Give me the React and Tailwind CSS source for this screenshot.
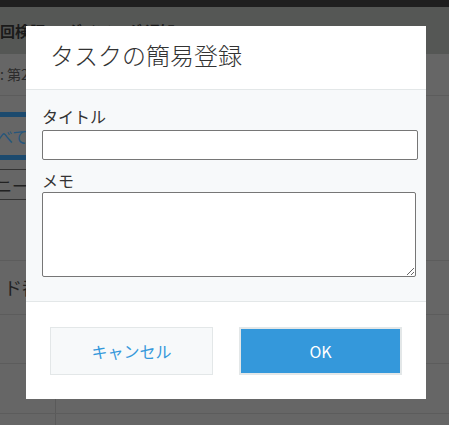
export default function App() {
  const font = { fontFamily: '"Noto Sans CJK JP", "Noto Sans", sans-serif' };
  return (
    <div className="relative w-[449px] h-[425px] overflow-hidden bg-[#666666]" style={font}>
      {/* dimmed background page */}
      <div className="flex flex-col">
        <div className="h-[7px] bg-[#1f1f1f]" />
        <div className="h-[47px] bg-[#555755] flex items-center">
          <span className="text-[15px] font-bold text-[#1a1a1a] whitespace-nowrap leading-none">回検証 ー ダイアログ 通知API</span>
        </div>
        <div className="h-[42px] border-b border-[#5c5c5c] flex items-center">
          <span className="text-[14px] text-[#2b2b2b] whitespace-nowrap">: 第2回検証</span>
        </div>
        <div className="h-[165px] border-b border-[#5c5c5c] flex flex-col pt-[16px]">
          <div className="h-[5px] w-[60px] bg-[#1c4a6e]" />
          <div className="h-[38px] flex items-center">
            <span className="text-[16px] text-[#27567c] ml-[-3px] whitespace-nowrap">べて</span>
          </div>
          <div className="h-[5px] w-[60px] bg-[#1c4a6e]" />
          <div className="mt-[9px] h-[31px] w-[60px] border-y border-[#333333] flex items-center">
            <span className="text-[16px] text-[#222222] ml-[-4px] whitespace-nowrap">ニーイ</span>
          </div>
        </div>
        <div className="h-[54px] border-b border-[#5c5c5c] flex items-center">
          <span className="text-[18px] text-[#222222] ml-[4px] whitespace-nowrap">ド番</span>
        </div>
        <div className="h-[49px] border-b border-[#5c5c5c] flex">
          <div className="w-[56px] border-r border-[#5a5a5a]" />
        </div>
        <div className="h-[50px] border-b border-[#5c5c5c] flex">
          <div className="w-[56px] border-r border-[#5a5a5a]" />
        </div>
        <div className="h-[20px] flex">
          <div className="w-[56px] border-r border-[#5a5a5a]" />
        </div>
      </div>

      {/* dialog */}
      <div className="absolute left-[26px] top-[26px] w-[400px] flex flex-col bg-white">
        <div className="h-[64px] border-b border-[#e3e7e8] pl-[24px] pt-[13px]">
          <div className="text-[24px] leading-[32px] font-light text-[#333333]">タスクの簡易登録</div>
        </div>
        <div className="bg-[#f7f9fa] pl-[16px] pt-[14px] pb-[24px] flex flex-col">
          <div className="text-[16px] leading-[24px] text-[#333333]">タイトル</div>
          <input
            type="text"
            className="mt-[2px] w-[376px] h-[30px] bg-white border border-[#767676] rounded-[2px] outline-none"
          />
          <div className="mt-[8px] text-[16px] leading-[24px] text-[#333333]">メモ</div>
          <textarea
            className="w-[374px] h-[85px] bg-white border border-[#767676] rounded-[2px] outline-none block"
          />
        </div>
        <div className="border-t border-[#e3e7e8] pt-[25px] pb-[24px] px-[24px] flex gap-[26px]">
          <button className="w-[163px] h-[48px] bg-[#f7f9fa] border border-[#e3e7e8] text-[#3498db] text-[16px] flex items-center justify-center">
            キャンセル
          </button>
          <button className="w-[163px] h-[48px] bg-[#3498db] border-2 border-[#e3e7e8] text-white text-[16px] flex items-center justify-center">
            OK
          </button>
        </div>
      </div>
    </div>
  );
}
